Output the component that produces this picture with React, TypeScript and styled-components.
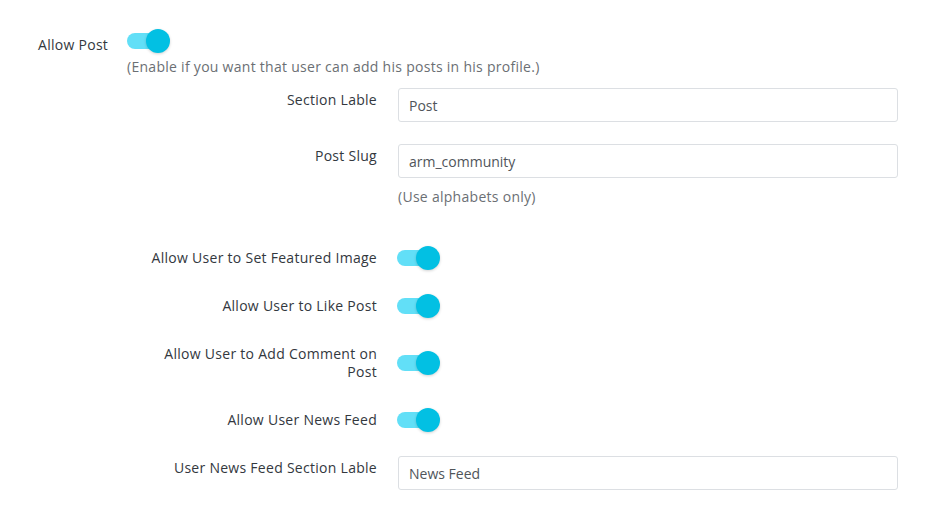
import React from "react";
import styled, { createGlobalStyle } from "styled-components";

const Global = createGlobalStyle`
  html, body { margin: 0; padding: 0; background: #ffffff; }
  body { font-family: "Open Sans", "Noto Sans", Arial, sans-serif; font-size: 14px; color: #33383e; }
`;

const Page = styled.div`
  width: 939px;
  height: 527px;
  box-sizing: border-box;
  padding-top: 29px;
  background: #fff;
  letter-spacing: 0.28px;
`;

const TopRow = styled.div`
  display: flex;
  align-items: flex-start;
  padding-left: 38px;
`;

const TopLabel = styled.div`
  width: 89px;
  padding-top: 7px;
  line-height: 18px;
  color: #33383e;
`;

const Hint = styled.div<{ $indent: number; $top: number }>`
  margin-left: ${(p) => p.$indent}px;
  margin-top: ${(p) => p.$top}px;
  line-height: 18px;
  color: #6b6f74;
`;

const Row = styled.div<{ $top: number; $center?: boolean }>`
  display: flex;
  align-items: ${(p) => (p.$center ? "center" : "flex-start")};
  gap: 21px;
  margin-top: ${(p) => p.$top}px;
`;

const FieldLabel = styled.div<{ $pad?: number }>`
  width: 377px;
  flex: none;
  text-align: right;
  line-height: 18px;
  padding-top: ${(p) => p.$pad ?? 0}px;
  color: #33383e;
`;

const NarrowLabel = styled.span`
  display: inline-block;
  max-width: 235px;
`;

const Input = styled.input`
  width: 500px;
  height: 34px;
  box-sizing: border-box;
  border: 1px solid #dcdfe3;
  border-radius: 3px;
  padding: 0 10px;
  font-family: "Open Sans", "Noto Sans", Arial, sans-serif;
  font-size: 14px;
  letter-spacing: 0;
  color: #50555a;
  background: #fff;
  outline: none;
`;

const ToggleWrap = styled.div<{ $h: number; $shift: number }>`
  position: relative;
  width: 43px;
  height: ${(p) => p.$h}px;
  margin-left: ${(p) => p.$shift}px;
  flex: none;
  display: flex;
  align-items: center;
`;

const Track = styled.div`
  width: 36px;
  height: 16px;
  border-radius: 8px;
  background: #62dff7;
`;

const Knob = styled.div`
  position: absolute;
  right: 0;
  top: 50%;
  width: 24px;
  height: 24px;
  margin-top: -12px;
  border-radius: 50%;
  background: #02c0e3;
  box-shadow: 0 1px 3px rgba(0, 0, 0, 0.18);
`;

const Toggle: React.FC<{ h?: number; shift?: number }> = ({ h = 24, shift = 0 }) => (
  <ToggleWrap $h={h} $shift={shift}>
    <Track />
    <Knob />
  </ToggleWrap>
);

export default function App() {
  return (
    <Page>
      <Global />
      <TopRow>
        <TopLabel>Allow Post</TopLabel>
        <Toggle />
      </TopRow>
      <Hint $indent={127} $top={4}>
        (Enable if you want that user can add his posts in his profile.)
      </Hint>

      <Row $top={12}>
        <FieldLabel $pad={3}>Section Lable</FieldLabel>
        <Input defaultValue="Post" readOnly />
      </Row>
      <Row $top={22}>
        <FieldLabel $pad={3}>Post Slug</FieldLabel>
        <Input defaultValue="arm_community" readOnly />
      </Row>
      <Hint $indent={398} $top={10}>
        (Use alphabets only)
      </Hint>

      <Row $top={43} $center>
        <FieldLabel>Allow User to Set Featured Image</FieldLabel>
        <Toggle h={18} shift={-1} />
      </Row>
      <Row $top={30} $center>
        <FieldLabel>Allow User to Like Post</FieldLabel>
        <Toggle h={18} shift={-1} />
      </Row>
      <Row $top={30} $center>
        <FieldLabel>
          <NarrowLabel>Allow User to Add Comment on Post</NarrowLabel>
        </FieldLabel>
        <Toggle h={18} shift={-1} />
      </Row>
      <Row $top={30} $center>
        <FieldLabel>Allow User News Feed</FieldLabel>
        <Toggle h={18} shift={-1} />
      </Row>
      <Row $top={27}>
        <FieldLabel $pad={3}>User News Feed Section Lable</FieldLabel>
        <Input defaultValue="News Feed" readOnly />
      </Row>
    </Page>
  );
}
